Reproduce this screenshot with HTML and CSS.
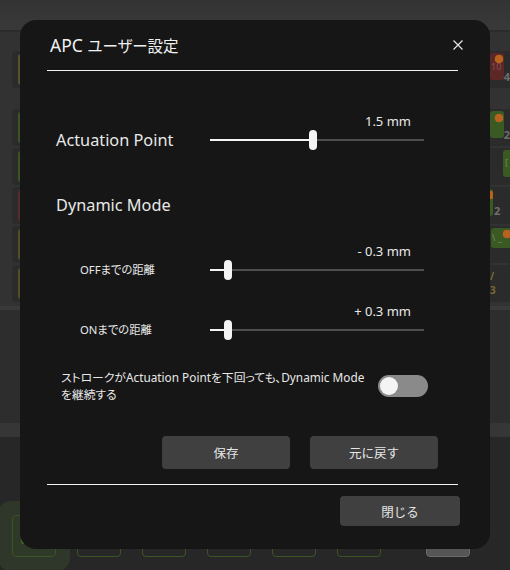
FILE: index.html
```html
<!DOCTYPE html>
<html lang="ja">

<head>
  <meta charset="UTF-8" />
  <meta name="viewport" content="width=device-width, initial-scale=1.0" />
  <title>APC ユーザー設定</title>
  <link rel="stylesheet" href="styles.css">
</head>

<body>
  <!-- キーボード画面（ダイアログの背後） -->
  <div class="app">
    <div class="topbar"></div>
    <div class="board">
      <div class="krow first">
        <div class="key-left"><span class="cap yellow"></span></div>
        <div class="rk">
          <span class="rbox red">10</span>
          <span class="num">4</span>
        </div>
      </div>
      <div class="krow">
        <div class="key-left"><span class="cap green"></span></div>
        <div class="rk">
          <span class="rbox green dot2"></span>
          <span class="num">2</span>
        </div>
      </div>
      <div class="krow">
        <div class="key-left"><span class="cap green"></span></div>
        <div class="rk split">
          <span class="rbox green wide">[</span>
        </div>
      </div>
      <div class="krow">
        <div class="key-left"><span class="cap red"></span></div>
        <div class="rk">
          <span class="rbox green thin"></span>
          <span class="num mid">2</span>
        </div>
      </div>
      <div class="krow">
        <div class="key-left"><span class="cap olive"></span></div>
        <div class="rk">
          <span class="rbox green long">\ _</span>
        </div>
      </div>
      <div class="krow">
        <div class="key-left"><span class="cap olive"></span></div>
        <div class="rk">
          <span class="ytext">/ 3</span>
        </div>
      </div>
    </div>
    <div class="board-edge"></div>
    <div class="lower"></div>
    <div class="band"></div>
    <div class="footer">
      <div class="fkeys">
        <div class="fkey active"><span></span></div>
        <div class="fkey"></div>
        <div class="fkey"></div>
        <div class="fkey"></div>
        <div class="fkey"></div>
        <div class="fkey"></div>
        <div class="fkey gray"></div>
      </div>
    </div>
  </div>

  <!-- APC ユーザー設定ダイアログ -->
  <div class="dialog">
    <div class="dlg-head">
      <h1 class="dlg-title">APC <span class="jp">ユーザー設定</span></h1>
      <button class="dlg-x" aria-label="閉じる">
        <svg width="10" height="10" viewBox="0 0 10 10">
          <path d="M0.5 0.5 L9.5 9.5 M9.5 0.5 L0.5 9.5" stroke="#e6e6e6" stroke-width="1.2" fill="none" />
        </svg>
      </button>
    </div>

    <div class="dlg-body">
      <div class="setting main">
        <div class="label">Actuation Point</div>
        <div class="slider">
          <div class="value">1.5 mm</div>
          <div class="track">
            <span class="fill" style="width: 99px"></span>
            <span class="thumb"></span>
            <span class="rest"></span>
          </div>
        </div>
      </div>

      <div class="section-title">Dynamic Mode</div>

      <div class="setting sub off">
        <div class="label">OFFまでの距離</div>
        <div class="slider">
          <div class="value">- 0.3 mm</div>
          <div class="track">
            <span class="fill" style="width: 14px"></span>
            <span class="thumb"></span>
            <span class="rest"></span>
          </div>
        </div>
      </div>

      <div class="setting sub on">
        <div class="label">ONまでの距離</div>
        <div class="slider">
          <div class="value">+ 0.3 mm</div>
          <div class="track">
            <span class="fill" style="width: 14px"></span>
            <span class="thumb"></span>
            <span class="rest"></span>
          </div>
        </div>
      </div>

      <div class="toggle-row">
        <p class="toggle-text">ストロークがActuation Pointを下回っても、Dynamic Mode<br>を継続する</p>
        <span class="switch"><span class="knob"></span></span>
      </div>

      <div class="actions">
        <button class="btn">保存</button>
        <button class="btn">元に戻す</button>
      </div>
    </div>

    <div class="dlg-foot">
      <button class="btn close">閉じる</button>
    </div>
  </div>
</body>

</html>
```

FILE: styles.css
```css
body,
html {
  margin: 0;
  padding: 0;
  width: 510px;
  height: 570px;
  overflow: hidden;
  background-color: #282828;
  font-family: 'Noto Sans', 'Noto Sans CJK JP', sans-serif;
  color: #ececec;
}

/* ---------- 背景のキーボード画面 ---------- */

.app {
  width: 510px;
  height: 570px;
  display: flex;
  flex-direction: column;
}

.topbar {
  height: 30px;
  flex-shrink: 0;
  background: linear-gradient(#333333, #393939);
  border-bottom: 2px solid #2b2b2b;
}

.board {
  height: 274px;
  flex-shrink: 0;
  background-color: #323232;
  display: flex;
  flex-direction: column;
  gap: 2px;
}

.krow {
  height: 37px;
  flex-shrink: 0;
  display: flex;
  justify-content: space-between;
}

.krow.first {
  margin-top: 19px;
  margin-bottom: 19px;
}

.key-left {
  width: 44px;
  margin-left: 12px;
  background-color: #2b2b2b;
  border-radius: 4px;
  padding: 3px 0 3px 6px;
  box-sizing: border-box;
  display: flex;
}

.cap {
  flex: 1;
  border-radius: 3px;
}

.cap.yellow {
  background-color: #57512f;
}

.cap.green {
  background-color: #3a5526;
}

.cap.red {
  background-color: #552b2b;
}

.cap.olive {
  background-color: #554c28;
}

.rk {
  width: 40px;
  display: flex;
  align-items: flex-start;
  padding-left: 20px;
  box-sizing: border-box;
  background-color: #2b2b2b;
  border-radius: 4px 0 0 4px;
}

.rbox {
  width: 15px;
  height: 27px;
  margin-top: 2px;
  border-radius: 3px;
  font-size: 9px;
  line-height: 27px;
  color: #8a5050;
  text-indent: 1px;
}

.rbox.red {
  background: radial-gradient(circle at 9px 6px, #b8621f 4px, transparent 4.6px), #5c2727;
}

.rbox.green {
  background-color: #3b5a23;
  color: #6f8a5a;
}

.rbox.dot2 {
  background: radial-gradient(circle at 9px 7px, #b8621f 4px, transparent 4.6px), #3b5a23;
}

.rk.split {
  padding-left: 24px;
  border-left: 2px solid #262626;
}

.rbox.wide {
  margin-left: 7px;
  width: 10px;
  border-radius: 3px 0 0 3px;
  line-height: 26px;
  text-indent: 2px;
}

.rbox.thin {
  width: 3px;
  border-radius: 0 3px 3px 0;
  background: radial-gradient(circle at 0 6px, #b8621f 4px, transparent 4.6px), #3b5a23;
}

.rbox.long {
  margin-left: 1px;
  width: 19px;
  height: 20px;
  line-height: 20px;
  border-radius: 3px 0 0 3px;
  background: radial-gradient(circle at 16px 6px, #b8621f 4px, transparent 4.6px), #3b5a23;
}

.num {
  margin-top: 20px;
  font-size: 11px;
  font-weight: bold;
  color: #6e6e6e;
  line-height: 11px;
}

.num.mid {
  margin-top: 18px;
  margin-left: 1px;
}

.ytext {
  width: 9px;
  font-size: 10px;
  line-height: 14px;
  margin-top: 4px;
  color: #7a6a32;
  font-weight: bold;
}

.board-edge {
  height: 4px;
  flex-shrink: 0;
  background-color: #3a3a3a;
}

.lower {
  height: 113px;
  flex-shrink: 0;
  background-color: #2d2d2d;
}

.band {
  height: 14px;
  flex-shrink: 0;
  background-color: #363636;
}

.footer {
  flex: 1;
  background-color: #272727;
}

.fkeys {
  display: flex;
  gap: 21px;
  margin-top: 78px;
  padding-left: 12px;
}

.fkey {
  width: 44px;
  height: 42px;
  border: 1px solid #3b5526;
  border-radius: 4px;
  box-sizing: border-box;
}

.fkey.active {
  background-color: rgba(70, 110, 40, 0.25);
  box-shadow: 0 0 0 14px rgba(60, 85, 45, 0.35);
  padding: 2px 0 12px 8px;
  display: flex;
}

.fkey.active span {
  width: 7px;
  background-color: #3f6a1f;
  border-radius: 2px;
}

.fkey.gray {
  margin-left: 24px;
  border-color: #6a6a6a;
  background-color: #555555;
}

/* ---------- ダイアログ ---------- */

.dialog {
  position: absolute;
  left: 20px;
  top: 20px;
  width: 470px;
  height: 529px;
  box-sizing: border-box;
  padding: 0 32px 0 27px;
  background-color: #161616;
  border-radius: 16px;
  display: flex;
  flex-direction: column;
}

.dlg-head {
  height: 50px;
  flex-shrink: 0;
  display: flex;
  align-items: center;
  justify-content: space-between;
  border-bottom: 1px solid #f2f2f2;
}

.dlg-title {
  margin: 0;
  padding-left: 3px;
  font-size: 17.5px;
  line-height: 24px;
  font-weight: normal;
  color: #f0f0f0;
}

.dlg-title .jp {
  font-size: 15.5px;
  font-feature-settings: "palt";
}

.dlg-x {
  margin-right: -5px;
  background: none;
  border: none;
  padding: 0;
  width: 10px;
  height: 10px;
  display: flex;
}

.dlg-body {
  padding-left: 9px;
  flex: 1;
}

.setting {
  display: grid;
  grid-template-columns: 154px 214px;
  align-items: end;
}

.setting.main {
  margin-top: 41px;
}

.setting.off {
  margin-top: 25px;
}

.setting.on {
  margin-top: 22px;
}

.label {
  font-size: 16.3px;
  line-height: 20px;
  color: #e8e8e8;
}

.setting.sub .label {
  padding-left: 24px;
  font-size: 11.3px;
  font-feature-settings: "palt";
}

.section-title {
  margin-top: 43px;
  font-size: 16.3px;
  line-height: 24px;
  color: #e8e8e8;
}

.value {
  height: 18px;
  line-height: 18px;
  padding-right: 13px;
  text-align: right;
  font-size: 13px;
  color: #e8e8e8;
}

.track {
  height: 20px;
  display: flex;
  align-items: center;
}

.track .fill {
  height: 2px;
  background-color: #f4f4f4;
}

.track .thumb {
  width: 8px;
  height: 20px;
  border-radius: 4px;
  background-color: #f4f4f4;
}

.track .rest {
  flex: 1;
  height: 2px;
  background-color: #4d4d4d;
}

.toggle-row {
  margin-top: 29px;
  padding-left: 5px;
  display: flex;
  align-items: center;
  gap: 5px;
}

.toggle-text {
  margin: 0;
  width: 312px;
  font-size: 11.8px;
  line-height: 17px;
  white-space: nowrap;
  color: #e8e8e8;
  font-feature-settings: "palt";
}

.switch {
  width: 50px;
  height: 22px;
  border-radius: 11px;
  background-color: #8a8a8a;
  padding: 2px;
  box-sizing: border-box;
  display: flex;
}

.switch .knob {
  width: 18px;
  height: 18px;
  border-radius: 50%;
  background-color: #f4f4f4;
}

.actions {
  margin-top: 33px;
  padding-right: 20px;
  display: flex;
  justify-content: flex-end;
  gap: 20px;
}

.btn {
  width: 128px;
  height: 33px;
  border: none;
  border-radius: 4px;
  background-color: #404040;
  color: #e6e6e6;
  font-family: 'Noto Sans CJK JP', sans-serif;
  font-size: 12.5px;
  padding: 0;
}

.dlg-foot {
  flex-shrink: 0;
  margin-top: 15px;
  margin-bottom: 23px;
  padding-top: 11px;
  border-top: 1px solid #f2f2f2;
  display: flex;
  justify-content: flex-end;
}

.btn.close {
  width: 120px;
  height: 30px;
  margin-right: -2px;
}
```
